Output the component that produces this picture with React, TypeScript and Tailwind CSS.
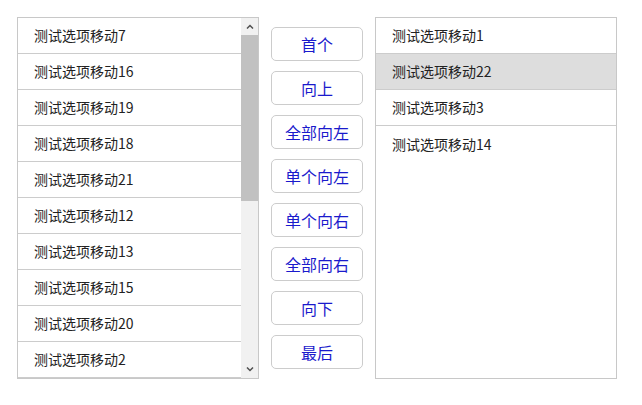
const leftItems = ["7", "16", "19", "18", "21", "12", "13", "15", "20", "2"];
const rightItems = ["1", "22", "3", "14"];
const buttons = ["首个", "向上", "全部向左", "单个向左", "单个向右", "全部向右", "向下", "最后"];

const font = { fontFamily: '"Noto Sans CJK SC", "Liberation Sans", sans-serif' };

const Row = ({ label, active = false, last = false }: { label: string; active?: boolean; last?: boolean }) => (
  <div
    className={`h-9 shrink-0 flex items-center pl-4 text-[14px] text-[#222] ${active ? "bg-[#dddddd]" : "bg-white"} ${last ? "" : "border-b border-[#cccccc]"}`}
  >
    测试选项移动{label}
  </div>
);

const App = () => {
  return (
    <div className="w-[642px] h-[405px] bg-white pt-[17px] pl-[17px] flex gap-3" style={font}>
      {/* left list, scrolled to top */}
      <div className="w-[242px] h-[362px] border border-[#c8c8c8] flex">
        <div className="flex-1 overflow-hidden flex flex-col">
          {leftItems.map((n) => (
            <Row key={n} label={n} />
          ))}
        </div>
        <div className="w-[17px] bg-[#f1f1f1] flex flex-col">
          <div className="h-[17px] flex items-center justify-center">
            <svg width="8" height="5" viewBox="0 0 8 5">
              <path d="M1 4.5 L4 1.5 L7 4.5" fill="none" stroke="#505050" strokeWidth="1.5" />
            </svg>
          </div>
          <div className="h-[166px] bg-[#c1c1c1]" />
          <div className="flex-1" />
          <div className="h-[17px] flex items-center justify-center">
            <svg width="8" height="5" viewBox="0 0 8 5">
              <path d="M1 0.5 L4 3.5 L7 0.5" fill="none" stroke="#505050" strokeWidth="1.5" />
            </svg>
          </div>
        </div>
      </div>

      <div className="w-[92px] pt-[10px] flex flex-col gap-[10px]">
        {buttons.map((b) => (
          <button
            key={b}
            className="h-[34px] w-full rounded-[5px] border border-[#cccccc] bg-white text-[16px] text-[#1a1acc]"
          >
            {b}
          </button>
        ))}
      </div>

      <div className="w-[242px] h-[362px] border border-[#c8c8c8] flex flex-col">
        {rightItems.map((n, i) => (
          <Row key={n} label={n} active={n === "22"} last={i === rightItems.length - 1} />
        ))}
      </div>
    </div>
  );
};

export default App;
